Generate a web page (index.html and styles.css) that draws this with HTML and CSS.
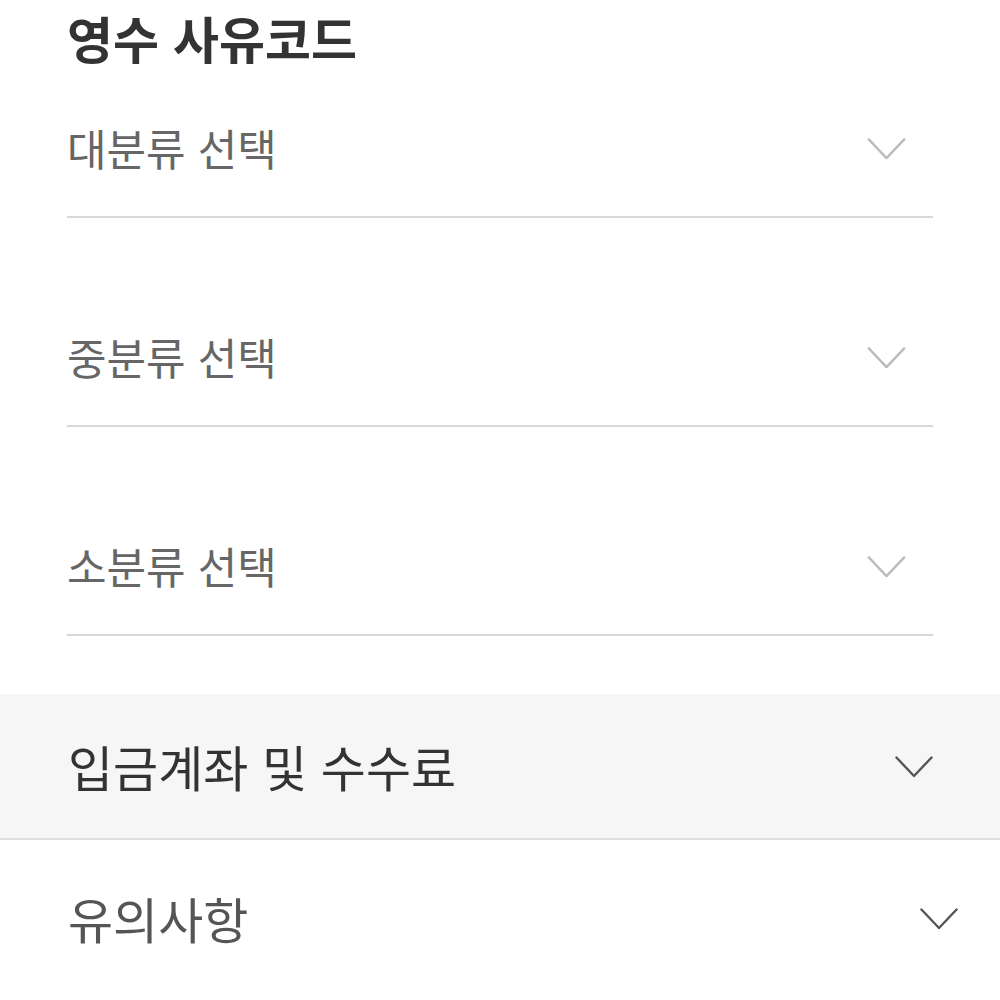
FILE: index.html
```html
<!DOCTYPE html>
<html lang="ko">
<head>
<meta charset="utf-8">
<link rel="stylesheet" href="styles.css">
</head>
<body>
<div class="form">
  <h2 class="title">영수 사유코드</h2>
  <div class="select select-first">
    <span class="select-label">대분류 선택</span>
    <svg class="chev chev-light" viewBox="0 0 40 23"><path d="M1.5 1.5 L20 21 L38.5 1.5"/></svg>
  </div>
  <div class="select">
    <span class="select-label">중분류 선택</span>
    <svg class="chev chev-light" viewBox="0 0 40 23"><path d="M1.5 1.5 L20 21 L38.5 1.5"/></svg>
  </div>
  <div class="select">
    <span class="select-label">소분류 선택</span>
    <svg class="chev chev-light" viewBox="0 0 40 23"><path d="M1.5 1.5 L20 21 L38.5 1.5"/></svg>
  </div>
</div>
<div class="acc acc-open">
  <span class="acc-label">입금계좌 및 수수료</span>
  <svg class="chev chev-dark" viewBox="0 0 40 23"><path d="M1.5 1.5 L20 21 L38.5 1.5"/></svg>
</div>
<div class="acc acc-plain">
  <span class="acc-label">유의사항</span>
  <svg class="chev chev-dark" viewBox="0 0 40 23"><path d="M1.5 1.5 L20 21 L38.5 1.5"/></svg>
</div>
</body>
</html>
```
FILE: styles.css
```css
html, body {
  margin: 0;
  padding: 0;
  background: #ffffff;
  font-family: "Noto Sans CJK KR", "Noto Sans", sans-serif;
}
.form {
  padding: 0 67px 58px;
}
.title {
  margin: 0;
  font-size: 50px;
  font-weight: 700;
  color: #333333;
  line-height: 74px;
  height: 76px;
}
.select {
  display: flex;
  align-items: center;
  justify-content: space-between;
  padding: 106px 0 37px;
  border-bottom: 2px solid #d9d9d9;
}
.select-first {
  padding-top: 39px;
}
.select-label {
  font-size: 43px;
  line-height: 64px;
  color: #666666;
}
.chev {
  display: block;
  fill: none;
  stroke-width: 2.5;
  stroke-linecap: round;
  stroke-linejoin: round;
}
.chev-light {
  width: 39px;
  height: 22px;
  stroke: #bbbbbb;
  margin: 4px 27px 0 0;
}
.chev-dark {
  width: 38px;
  height: 22px;
  stroke: #555555;
  margin-top: 2px;
}
.acc {
  display: flex;
  align-items: center;
  justify-content: space-between;
  padding: 0 67px 0 68px;
}
.acc-open {
  height: 146px;
  background: #f6f6f6;
  border-bottom: 2px solid #dddddd;
  box-sizing: border-box;
}
.acc-open .acc-label {
  color: #333333;
}
.acc-plain {
  height: 155px;
  padding-right: 42px;
}
.acc-plain .acc-label {
  color: #555555;
}
.acc-label {
  font-size: 49px;
  line-height: 64px;
}
```
